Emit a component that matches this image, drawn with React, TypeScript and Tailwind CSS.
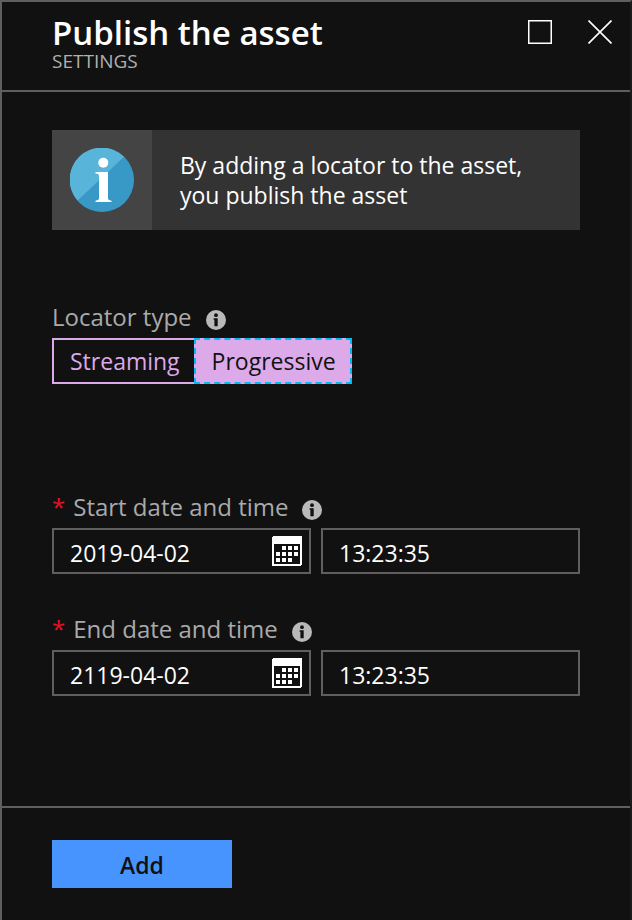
import { useState } from "react";

function InfoDot() {
  return (
    <svg aria-hidden="true" viewBox="0 0 20 20" className="mt-1 h-5 w-5 shrink-0">
      <circle cx="10" cy="10" r="10" fill="#b9b9b9" />
      <circle cx="10" cy="5.2" r="1.9" fill="#111" />
      <path d="M7.6 8.2h4.1v8H8.4V9.700h-.8z" fill="#111" />
    </svg>
  );
}

function CalendarIcon() {
  return (
    <svg aria-hidden="true" viewBox="0 0 30 30" className="h-[30px] w-[30px]" shapeRendering="crispEdges">
      <rect x="1" y="1" width="28" height="28" rx="1" fill="none" stroke="#fff" strokeWidth="2" />
      <path d="M0 1h1V0h28v1h1v7H0z" fill="#fff" />
      <path
        d="M10 10h4v4h-4zM16 10h4v4h-4zM22 10h4v4h-4zM4 16h4v4H4zM10 16h4v4h-4zM16 16h4v4h-4zM22 16h4v4h-4zM4 22h4v4H4zM10 22h4v4h-4zM16 22h4v4h-4z"
        fill="#fff"
      />
    </svg>
  );
}

function InfoBadge() {
  return (
    <svg aria-hidden="true" viewBox="0 0 64 64" className="h-16 w-16">
      <circle cx="32" cy="32" r="32" fill="#3999c6" />
      <path d="M7.500 52.600A32 32 0 0 1 54 8.700z" fill="#59b4d9" />
      <circle cx="33.300" cy="14.800" r="5" fill="#fff" />
      <path d="M25.500 24H38v26c0 1.700.6 2.200 3.500 2.700v1.300h-16v-1.300c2.900-.5 3.500-1 3.500-2.700V28.500c0-2-.6-2.700-3.500-3z" fill="#fff" />
    </svg>
  );
}

type LocatorType = "Streaming" | "Progressive";

function LocatorOption({ value, selected, onSelect }: { value: LocatorType; selected: boolean; onSelect: (v: LocatorType) => void }) {
  return (
    <label
      className={
        selected
          ? "flex h-[46px] cursor-pointer items-center border-2 border-dashed border-[#00bcf2] bg-[#dcaae9] pr-[14px] pl-4 text-[#111]"
          : "flex h-[46px] cursor-pointer items-center border-2 border-r-0 border-[#dcaae9] pr-[14px] pl-4 text-[#dcaae9]"
      }
    >
      <input type="radio" name="locator" value={value} checked={selected} onChange={() => onSelect(value)} className="sr-only" />
      {value}
    </label>
  );
}

function DateTimeField({ id, label, date, time }: { id: string; label: string; date: string; time: string }) {
  return (
    <div>
      <div className="flex h-10 items-center gap-[14px] pb-[2px]">
        <label htmlFor={id} className="flex items-center gap-2 text-2xl text-[#aaa]">
          <span className="text-[#e81123]">*</span>
          {label}
        </label>
        <span className="pt-[2px]">
          <InfoDot />
        </span>
      </div>
      <div className="grid grid-cols-2 gap-[10px]">
        <div className="flex h-[46px] items-center border-2 border-[#605e5e] pr-[7px]">
          <input id={id} type="text" defaultValue={date} className="h-full w-full min-w-0 flex-1 bg-transparent pt-1 pl-4 text-[23px] text-white outline-none" />
          <button type="button" aria-label={"Pick " + label.toLowerCase()}>
            <CalendarIcon />
          </button>
        </div>
        <input
          type="text"
          aria-label={label + ", time"}
          defaultValue={time}
          className="h-[46px] w-full min-w-0 border-2 border-[#605e5e] bg-transparent px-4 pt-1 text-[23px] text-white outline-none"
        />
      </div>
    </div>
  );
}

export default function App() {
  const [locator, setLocator] = useState<LocatorType>("Progressive");
  return (
    <main className="flex min-h-screen flex-col border-t-2 border-r-2 border-l-2 border-[#605e5e] border-r-[#1b1b1b] bg-[#111] font-['Open_Sans','Noto_Sans',sans-serif]">
      <header className="flex h-[90px] items-start justify-between border-b-2 border-[#605e5e] pt-[14px] pr-[18px] pl-[50px]">
        <div>
          <h1 className="text-[33px] leading-[34px] font-semibold text-white">Publish the asset</h1>
          <p className="text-[19px] leading-[22px] text-[#b0b0b0]">SETTINGS</p>
        </div>
        <div className="flex items-center gap-9 pt-1">
          <button type="button" aria-label="Maximize">
            <svg viewBox="0 0 24 24" className="h-6 w-6" fill="none" stroke="#fff">
              <path d="M.75.75h22.500v22.500H.75z" strokeWidth="1.500" />
            </svg>
          </button>
          <button type="button" aria-label="Close">
            <svg viewBox="0 0 24 24" className="h-6 w-6" fill="none" stroke="#fff" strokeWidth="1.600">
              <path d="M.5.5l23 23M23.500.5l-23 23" />
            </svg>
          </button>
        </div>
      </header>

      <form id="publish" className="flex-1 px-[50px] pt-[38px]">
        <div className="flex min-h-[100px] bg-[#333]">
          <div className="flex w-[100px] shrink-0 items-center justify-center bg-[#444]">
            <InfoBadge />
          </div>
          <p className="max-w-[400px] self-center px-7 text-[23px] leading-[30px] text-white">
            By adding a locator to the asset,
            <br />
            you publish the asset
          </p>
        </div>

        <fieldset className="mt-[68px]">
          <legend className="flex h-10 items-center gap-[14px] pb-[2px] text-2xl text-[#aaa]">
            Locator type
            <span className="pt-[2px]">
              <InfoDot />
            </span>
          </legend>
          <div className="flex text-[23px]">
            <LocatorOption value="Streaming" selected={locator === "Streaming"} onSelect={setLocator} />
            <LocatorOption value="Progressive" selected={locator === "Progressive"} onSelect={setLocator} />
          </div>
        </fieldset>

        <div className="mt-[104px] flex flex-col gap-9">
          <DateTimeField id="start" label="Start date and time" date="2019-04-02" time="13:23:35" />
          <DateTimeField id="end" label="End date and time" date="2119-04-02" time="13:23:35" />
        </div>
      </form>

      <footer className="h-[114px] border-t-2 border-[#605e5e] px-[50px] pt-8">
        <button type="submit" form="publish" className="h-12 w-[180px] bg-[#4894fe] pt-[2px] text-[23px] font-semibold text-[#111]">
          Add
        </button>
      </footer>
    </main>
  );
}
